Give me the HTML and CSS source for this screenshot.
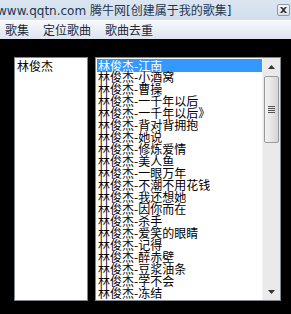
FILE: index.html
```html
<!DOCTYPE html>
<html lang="zh-CN">
<head>
	<meta charset="UTF-8">
	<title>腾牛网[创建属于我的歌集]</title>
	<link rel="stylesheet" href="styles.css">
</head>
<body>
	<div class="titlebar">
		<span class="title">www.qqtn.com 腾牛网[创建属于我的歌集]</span>
		<span class="close">
			<svg width="7" height="6" viewBox="0 0 7 6"><path d="M0 0h2l1.5 1.5L5 0h2L4.5 3 7 6H5L3.5 4.5 2 6H0l2.5-3z" fill="#333"/></svg>
		</span>
	</div>
	<div class="menubar">
		<span class="menu-item">歌集</span>
		<span class="menu-item">定位歌曲</span>
		<span class="menu-item">歌曲去重</span>
	</div>
	<div class="content">
		<div class="listbox singers">
			<div class="item">林俊杰</div>
		</div>
		<div class="listbox songs">
			<div class="items">
				<div class="item selected">林俊杰-江南</div>
				<div class="item">林俊杰-小酒窝</div>
				<div class="item">林俊杰-曹操</div>
				<div class="item">林俊杰-一千年以后</div>
				<div class="item">林俊杰-一千年以后》</div>
				<div class="item">林俊杰-背对背拥抱</div>
				<div class="item">林俊杰-她说</div>
				<div class="item">林俊杰-修炼爱情</div>
				<div class="item">林俊杰-美人鱼</div>
				<div class="item">林俊杰-一眼万年</div>
				<div class="item">林俊杰-不潮不用花钱</div>
				<div class="item">林俊杰-我还想她</div>
				<div class="item">林俊杰-因你而在</div>
				<div class="item">林俊杰-杀手</div>
				<div class="item">林俊杰-爱笑的眼睛</div>
				<div class="item">林俊杰-记得</div>
				<div class="item">林俊杰-醉赤壁</div>
				<div class="item">林俊杰-豆浆油条</div>
				<div class="item">林俊杰-学不会</div>
				<div class="item">林俊杰-冻结</div>
			</div>
			<div class="scrollbar">
				<div class="arrow up"><svg width="7" height="4" viewBox="0 0 7 4"><path d="M3.5 0L7 4H0z" fill="#333"/></svg></div>
				<div class="thumb">
					<span class="grip"></span>
					<span class="grip"></span>
					<span class="grip"></span>
					<span class="grip"></span>
				</div>
				<div class="track"></div>
				<div class="arrow down"><svg width="7" height="4" viewBox="0 0 7 4"><path d="M0 0h7L3.5 4z" fill="#333"/></svg></div>
			</div>
		</div>
	</div>
</body>
</html>
```

FILE: styles.css
```css
html, body {
	margin: 0;
	padding: 0;
}
body {
	background: #000;
	width: 291px;
	height: 314px;
	overflow: hidden;
	font-family: "Noto Sans CJK SC", sans-serif;
}
.titlebar {
	height: 20px;
	display: flex;
	align-items: center;
	justify-content: space-between;
	background: linear-gradient(#dce6f2, #d2deec);
	overflow: hidden;
}
.title {
	font-family: "DejaVu Sans", "Noto Sans CJK SC", sans-serif;
	font-size: 12px;
	color: #1e3550;
	margin-left: -3px;
	white-space: nowrap;
	line-height: 20px;
	margin-top: 2px;
}
.close {
	width: 13px;
	height: 12px;
	box-sizing: border-box;
	border: 1px solid #8d98a8;
	border-radius: 2px;
	background: linear-gradient(#f4f6f9, #d9dfe7);
	margin-right: 1px;
	display: flex;
	align-items: center;
	justify-content: center;
}
.menubar {
	height: 19px;
	display: flex;
	align-items: center;
	gap: 14px;
	padding-left: 5px;
	background: linear-gradient(#f6f8fb, #dde4ef);
	border-top: 1px solid #fbfcfe;
	box-sizing: border-box;
	font-size: 12px;
	color: #1e2a3a;
}
.menu-item {
	line-height: 16px;
}
.content {
	display: flex;
	gap: 7px;
	padding: 18px 0 0 14px;
}
.listbox {
	background: #fff;
	border: 1px solid #82878e;
	box-sizing: border-box;
	height: 244px;
}
.singers {
	width: 74px;
	padding: 1px 2px;
}
.singers .item {
	font-size: 12px;
	line-height: 13px;
	color: #000;
}
.songs {
	width: 186px;
	display: flex;
}
.items {
	flex: 1;
	padding: 1px 0 0 1px;
	overflow: hidden;
}
.songs .item {
	height: 12px;
	line-height: 12px;
	font-size: 12px;
	color: #000;
	padding-left: 1px;
	white-space: nowrap;
}
.songs .item.selected {
	background: #3399ff;
	color: #fff;
	height: 13px;
	line-height: 13px;
	margin-bottom: -1px;
}
.scrollbar {
	width: 17px;
	display: flex;
	flex-direction: column;
	background: #eaeaea;
	border-left: 1px solid #f2f2f2;
}
.arrow {
	height: 17px;
	display: flex;
	align-items: center;
	justify-content: center;
}
.thumb {
	height: 67px;
	margin: 1px 0 0 1px;
	width: 15px;
	box-sizing: border-box;
	border: 1px solid #9a9a9a;
	border-radius: 2px;
	background: linear-gradient(90deg, #f3f3f3, #e3e3e3 60%, #d4d4d4);
	display: flex;
	flex-direction: column;
	align-items: center;
	justify-content: center;
	gap: 1px;
}
.grip {
	width: 7px;
	height: 1px;
	background: #555;
}
.track {
	flex: 1;
}
```
